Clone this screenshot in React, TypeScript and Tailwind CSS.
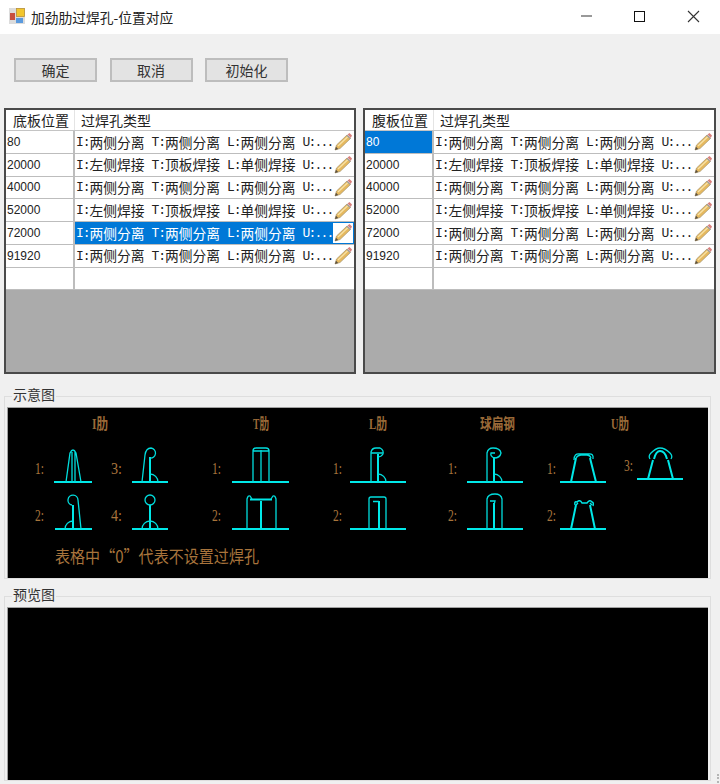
const cjk = "font-['Noto_Sans_CJK_SC','Microsoft_YaHei',sans-serif]";

type Row = { pos: string; kind: "a" | "b" };

const leftRows: Row[] = [
  { pos: "80", kind: "a" },
  { pos: "20000", kind: "b" },
  { pos: "40000", kind: "a" },
  { pos: "52000", kind: "b" },
  { pos: "72000", kind: "a" },
  { pos: "91920", kind: "a" },
];

const cellParts = {
  a: [["I:", "两侧分离"], ["T:", "两侧分离"], ["L:", "两侧分离"]],
  b: [["I:", "左侧焊接"], ["T:", "顶板焊接"], ["L:", "单侧焊接"]],
};

function Pencil() {
  return (
    <svg width="19" height="19" viewBox="0 0 19 19" className="shrink-0">
      <path d="M1 18 L2.5 13 L13 3 L16.5 6.5 L6 16.5 Z" fill="#e6b95f" stroke="#a5936f" strokeWidth="0.7" />
      <path d="M4 14 L14 4.5" stroke="#f7e3a8" strokeWidth="1.2" />
      <path d="M13.5 2.5 L15.5 1 L18 3.5 L16.8 6 Z" fill="#d9807c" />
      <path d="M12.8 3.2 L16.4 6.6" stroke="#a0a0a0" strokeWidth="1.2" />
      <path d="M1 18 L2 14.8 L4.2 16.9 Z" fill="#5a5040" />
    </svg>
  );
}

function TypeCell({ kind, selected }: { kind: "a" | "b"; selected: boolean }) {
  const mono = "font-['Liberation_Mono',monospace] text-[13px] tracking-[-1px] w-[13.5px] shrink-0";
  return (
    <div className={`flex-1 min-w-0 flex items-center pl-px ${selected ? "bg-[#0078d7] text-white" : ""}`}>
      <div className={`flex items-center gap-[7px] pt-px text-[13.75px] leading-none whitespace-nowrap ${cjk}`}>
        {cellParts[kind].map(([k, v]) => (
          <span key={k} className="flex items-center">
            <span className={mono}>{k}</span>
            <span className="w-[55px]">{v}</span>
          </span>
        ))}
        <span className="font-['Liberation_Mono',monospace] text-[13px] tracking-[-1.8px]">U:...</span>
      </div>
      <div className={`ml-auto h-[calc(100%-2px)] mr-[1px] w-[20px] shrink-0 flex items-center justify-center ${selected ? "bg-white" : ""}`}>
        <Pencil />
      </div>
    </div>
  );
}

function DataGrid({ title, width, selCell, selRow }: { title: string; width: string; selCell?: number; selRow?: number }) {
  return (
    <div className={`${width} h-[266px] border-2 border-[#4a4a4a] bg-[#ababab] flex flex-col`}>
      <div className="h-[21px] bg-white flex border-b border-[#c4c4c4] text-[#222]">
        <div className={`w-[69px] shrink-0 border-r border-[#e4e4e4] pl-[7px] text-[14px] leading-[21px] ${cjk}`}>{title}</div>
        <div className={`pl-[6px] text-[14px] leading-[21px] ${cjk}`}>过焊孔类型</div>
      </div>
      {leftRows.map((r, i) => (
        <div key={r.pos} className="h-[22.75px] bg-white flex border-b border-[#bdbdbd] text-[#222]">
          <div className={`w-[69px] shrink-0 border-r-2 border-[#bdbdbd] pl-px flex items-center font-['Liberation_Sans',sans-serif] text-[12px] ${selCell === i ? "bg-[#0078d7] text-white" : ""}`}>
            {r.pos}
          </div>
          <TypeCell kind={r.kind} selected={selRow === i} />
        </div>
      ))}
      <div className="h-[22.75px] bg-white flex border-b border-[#bdbdbd]">
        <div className="w-[69px] shrink-0 border-r-2 border-[#bdbdbd]" />
      </div>
    </div>
  );
}

function Title({ x, y, w, children }: { x: number; y: number; w: number; children: string }) {
  return (
    <text x={x} y={y} textLength={w} lengthAdjust="spacingAndGlyphs" fontSize="15" fontWeight="bold" fill="#9a6a38" fontFamily="'Liberation Serif','Noto Sans CJK SC',serif">
      {children}
    </text>
  );
}

function Num({ x, y, w = 9, children }: { x: number; y: number; w?: number; children: string }) {
  return (
    <text x={x} y={y} textLength={w} lengthAdjust="spacingAndGlyphs" fontSize="17" fill="#a8743c" fontFamily="'Liberation Serif',serif">
      {children}
    </text>
  );
}

function Sketch() {
  const thin = { fill: "none", stroke: "#00dede", strokeWidth: 1.3 };
  const thick = { fill: "none", stroke: "#00e8e8", strokeWidth: 2 };
  return (
    <svg viewBox="8 408 700 170" className="block w-full h-full">
      <Title x={92} y={429} w={16}>I肋</Title>
      <Title x={253} y={429} w={16}>T肋</Title>
      <Title x={369} y={429} w={18}>L肋</Title>
      <Title x={480} y={429} w={35}>球扁钢</Title>
      <Title x={611} y={429} w={18}>U肋</Title>

      <Num x={35} y={474}>1:</Num>
      <Num x={35} y={521}>2:</Num>
      <Num x={111} y={474} w={11}>3:</Num>
      <Num x={111} y={521} w={11}>4:</Num>
      <Num x={212} y={474}>1:</Num>
      <Num x={212} y={521}>2:</Num>
      <Num x={333} y={474}>1:</Num>
      <Num x={333} y={521}>2:</Num>
      <Num x={448} y={474}>1:</Num>
      <Num x={448} y={521}>2:</Num>
      <Num x={547} y={474}>1:</Num>
      <Num x={547} y={521}>2:</Num>
      <Num x={624} y={471}>3:</Num>

      {/* I肋 */}
      <path d="M54 482 H92 M132 482 H168 M55 529 H92 M132 529 H168" {...thick} />
      <path d="M66 482 L70 453 Q73 447 76 453 L81 482 M72 482 V452 M75 482 V452" {...thin} />
      <path d="M150 482 V457" {...thick} />
      <path d="M142 482 L145 455 Q146 448 151 448 A5 5 0 0 1 150 458 M158 482 A8 8 0 0 0 150 474" {...thin} />
      <path d="M73 529 V505" {...thick} />
      <path d="M72 505 A5 5 0 1 1 78 500 L81 529 M65 529 A8 8 0 0 1 73 521" {...thin} />
      <path d="M150 529 V505" {...thick} />
      <circle cx="150" cy="500" r="5" {...thin} />
      <path d="M142 529 A8 8 0 0 1 158 529" {...thin} />

      {/* T肋 */}
      <path d="M232 482 H289 M232 529 H289 M261 529 V501 M250 499.5 H272" {...thick} />
      <path d="M253 482 V450 M261 482 V450 M269 482 V450 M253 451 Q253 448 256 448 H266 Q269 448 269 451 Z" {...thin} />
      <path d="M247 529 V499 Q248 495 250 496 L252 499 M276 529 V499 Q275 495 273 496 L271 499" {...thin} />

      {/* L肋 */}
      <path d="M350 482 H406 M350 529 H406 M378 482 V454 M379 529 V501" {...thick} />
      <path d="M371 482 V452 Q372 448 376 448 H380 Q384 450 383 454 Q381 457 378 457 M371 453 H383 M378 474 A8 8 0 0 1 386 482" {...thin} />
      <path d="M369 529 V499 Q369 497 371 497 H384 Q386 497 386 499 V529 M373 501.5 H379" {...thin} />

      {/* 球扁钢 */}
      <path d="M467 482 H523 M467 529 H523 M494 482 V457 M494 529 V503" {...thick} />
      <path d="M487 482 V453 Q488 448 493 448 Q500 448 501 453 Q500 458 494 458 Q490 456 491 453 H495 M494 474 A8 8 0 0 1 502 482" {...thin} />
      <path d="M487 529 V499 Q488 494 495 494 Q501 494 502 499 V529 M490 501 H495 L494 505" {...thin} />

      {/* U肋 */}
      <path d="M560 482 H606 M637 479 H683 M560 529 H606" {...thick} />
      <path d="M571 482 L576 458 M596 482 L590 458 M648 479 L653 460 M673 479 L668 460 M571 529 L576 505 M595 529 L590 505" {...thick} />
      <path d="M574 460 Q574 453 580 454 H588 Q594 453 593 459 M576 458 Q578 455 581 455 H587 Q590 455 591 458" {...thin} />
      <path d="M650 459 Q648 456 651 453 Q656 448 660 448 Q665 448 670 453 Q673 456 671 459" {...thin} />
      <path d="M654 459 Q656 451 660 451 Q665 451 667 459" {...thick} />
      <path d="M575 505 Q574 501 577 502 Q580 499 582 503 H587 Q590 499 592 502 Q594 502 593 506 M576 505 L578 503 M592 505 L590 503" {...thick} strokeWidth={1.4} />

      <text x={55} y={563} textLength={204} lengthAdjust="spacingAndGlyphs" fontSize="17" fill="#a8743c" fontFamily="'Noto Sans CJK SC','Liberation Serif',serif">
        表格中“0”代表不设置过焊孔
      </text>
    </svg>
  );
}

function GroupBox({ label, height, panel, children }: { label: string; height: string; panel: string; children?: React.ReactNode }) {
  return (
    <div className={`relative ${height} w-[707px] border border-[#dedede] pt-[10px] px-[2px]`}>
      <span className={`absolute left-[7px] top-[-13px] bg-[#f0f0f0] px-px text-[14px] leading-[20px] text-[#333] ${cjk}`}>{label}</span>
      <div className={`${panel} w-[701px] bg-black border-l border-t border-[#a0a0a0]`}>{children}</div>
    </div>
  );
}

export default function App() {
  return (
    <div className={`w-[720px] h-[784px] overflow-hidden bg-[#f0f0f0] relative ${cjk}`}>
      <div className="h-[34px] bg-white flex items-center">
        <svg width="18" height="18" viewBox="0 0 18 18" className="ml-[8px] mt-[-3px]">
          <rect x="1" y="1" width="16" height="16" fill="#dcdcdc" />
          <rect x="8.5" y="1.5" width="8" height="8" fill="#f2c62e" stroke="#b8923a" strokeWidth="0.8" />
          <rect x="2" y="6" width="5" height="7" fill="#c8503f" />
          <rect x="8" y="11" width="7" height="5" fill="#5a9ade" />
        </svg>
        <span className="ml-[5px] text-[13.75px] text-[#222]">加劲肋过焊孔-位置对应</span>
        <div className="ml-auto flex h-full items-center">
          <svg width="54" height="34" viewBox="0 0 54 34"><path d="M23 16 H34" stroke="#999" strokeWidth="2" /></svg>
          <svg width="54" height="34" viewBox="0 0 54 34"><rect x="22.5" y="11.5" width="10" height="10" fill="none" stroke="#111" /></svg>
          <svg width="54" height="34" viewBox="0 0 54 34"><path d="M22 11 L33 22 M33 11 L22 22" stroke="#333" strokeWidth="1.1" /></svg>
        </div>
      </div>

      <div className="flex pl-[14px] pt-[24px] gap-[12.5px]">
        {["确定", "取消", "初始化"].map((b) => (
          <button key={b} className="w-[83px] h-[24px] bg-[#e3e3e3] border-2 border-[#bdbdbd] text-[14px] leading-none text-[#333]">
            {b}
          </button>
        ))}
      </div>

      <div className="flex pl-[4px] pt-[26px] gap-[7px]">
        <DataGrid title="底板位置" width="w-[352px]" selRow={4} />
        <DataGrid title="腹板位置" width="w-[353px]" selCell={0} />
      </div>

      <div className="pl-[4px] pt-[22px] flex flex-col gap-[17px]">
        <GroupBox label="示意图" height="h-[183px]" panel="h-[171px]">
          <Sketch />
        </GroupBox>
        <GroupBox label="预览图" height="h-[185px]" panel="h-[173px]" />
      </div>

      <div className="absolute right-[1px] bottom-[1px] w-[3px] h-[9px] border-r-2 border-dotted border-[#b5b5b5]" />
    </div>
  );
}
